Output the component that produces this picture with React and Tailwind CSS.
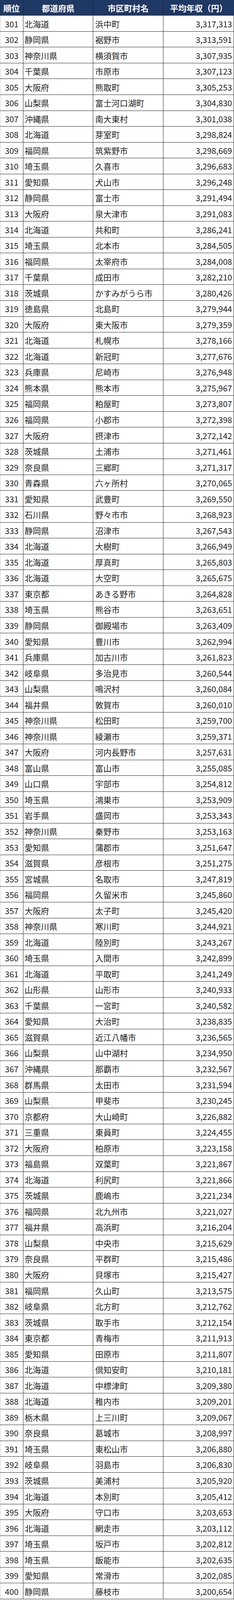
const rows = `301 北海道 浜中町 3,317,313
302 静岡県 裾野市 3,313,591
303 神奈川県 横須賀市 3,307,935
304 千葉県 市原市 3,307,123
305 大阪府 熊取町 3,305,253
306 山梨県 富士河口湖町 3,304,830
307 沖縄県 南大東村 3,301,038
308 北海道 芽室町 3,298,824
309 福岡県 筑紫野市 3,298,669
310 埼玉県 久喜市 3,296,683
311 愛知県 犬山市 3,296,248
312 静岡県 富士市 3,291,494
313 大阪府 泉大津市 3,291,083
314 北海道 共和町 3,286,241
315 埼玉県 北本市 3,284,505
316 福岡県 太宰府市 3,284,008
317 千葉県 成田市 3,282,210
318 茨城県 かすみがうら市 3,280,426
319 徳島県 北島町 3,279,944
320 大阪府 東大阪市 3,279,359
321 北海道 札幌市 3,278,166
322 北海道 新冠町 3,277,676
323 兵庫県 尼崎市 3,276,948
324 熊本県 熊本市 3,275,967
325 福岡県 粕屋町 3,273,807
326 福岡県 小郡市 3,272,398
327 大阪府 摂津市 3,272,142
328 茨城県 土浦市 3,271,461
329 奈良県 三郷町 3,271,317
330 青森県 六ヶ所村 3,270,065
331 愛知県 武豊町 3,269,550
332 石川県 野々市市 3,268,923
333 静岡県 沼津市 3,267,543
334 北海道 大樹町 3,266,949
335 北海道 厚真町 3,265,803
336 北海道 大空町 3,265,675
337 東京都 あきる野市 3,264,828
338 埼玉県 熊谷市 3,263,651
339 静岡県 御殿場市 3,263,409
340 愛知県 豊川市 3,262,994
341 兵庫県 加古川市 3,261,823
342 岐阜県 多治見市 3,260,544
343 山梨県 鳴沢村 3,260,084
344 福井県 敦賀市 3,260,010
345 神奈川県 松田町 3,259,700
346 神奈川県 綾瀬市 3,259,371
347 大阪府 河内長野市 3,257,631
348 富山県 富山市 3,255,085
349 山口県 宇部市 3,254,812
350 埼玉県 鴻巣市 3,253,909
351 岩手県 盛岡市 3,253,343
352 神奈川県 秦野市 3,253,163
353 愛知県 蒲郡市 3,251,647
354 滋賀県 彦根市 3,251,275
355 宮城県 名取市 3,247,819
356 福岡県 久留米市 3,245,860
357 大阪府 太子町 3,245,420
358 神奈川県 寒川町 3,244,921
359 北海道 陸別町 3,243,267
360 埼玉県 入間市 3,242,899
361 北海道 平取町 3,241,249
362 山形県 山形市 3,240,933
363 千葉県 一宮町 3,240,582
364 愛知県 大治町 3,238,835
365 滋賀県 近江八幡市 3,236,565
366 山梨県 山中湖村 3,234,950
367 沖縄県 那覇市 3,232,567
368 群馬県 太田市 3,231,594
369 山梨県 甲斐市 3,230,245
370 京都府 大山崎町 3,226,882
371 三重県 東員町 3,224,455
372 大阪府 柏原市 3,223,158
373 福島県 双葉町 3,221,867
374 北海道 利尻町 3,221,866
375 茨城県 鹿嶋市 3,221,234
376 福岡県 北九州市 3,221,027
377 福井県 高浜町 3,216,204
378 山梨県 中央市 3,215,629
379 奈良県 平群町 3,215,486
380 大阪府 貝塚市 3,215,427
381 福岡県 久山町 3,213,575
382 岐阜県 北方町 3,212,762
383 茨城県 取手市 3,212,154
384 東京都 青梅市 3,211,913
385 愛知県 田原市 3,211,807
386 北海道 倶知安町 3,210,181
387 北海道 中標津町 3,209,380
388 北海道 稚内市 3,209,201
389 栃木県 上三川町 3,209,067
390 奈良県 葛城市 3,208,997
391 埼玉県 東松山市 3,206,880
392 岐阜県 羽島市 3,206,830
393 茨城県 美浦村 3,205,920
394 北海道 本別町 3,205,412
395 大阪府 守口市 3,203,653
396 北海道 網走市 3,203,112
397 埼玉県 坂戸市 3,202,812
398 埼玉県 飯能市 3,202,635
399 愛知県 常滑市 3,202,085
400 静岡県 藤枝市 3,200,654`
  .split('\n')
  .map((line) => line.split(' '))

const App = () => {
  return (
    <div
      className="w-[600px] h-[calc(100vh-2px)] grid grid-rows-[minmax(0,43.4fr)_repeat(100,minmax(0,43.63fr))] bg-white text-[#222222] text-[21px] leading-none"
      style={{ fontFamily: '"Noto Sans CJK JP", "Noto Sans", sans-serif' }}
    >
      {/* Header */}
      <div className="grid grid-cols-[60px_179px_180px_181px] min-h-0 bg-[#203864] text-white font-bold">
        <div className="flex items-center justify-center border-r border-[#15264a]">順位</div>
        <div className="flex items-center justify-center border-r border-[#15264a]">都道府県</div>
        <div className="flex items-center justify-center border-r border-[#15264a]">市区町村名</div>
        <div className="flex items-center justify-center">平均年収（円）</div>
      </div>

      {/* Rows */}
      {rows.map(([rank, pref, city, income]) => (
        <div
          key={rank}
          className="grid grid-cols-[60px_179px_180px_181px] min-h-0 overflow-hidden border-b border-[#262626]"
        >
          <div className="flex items-center justify-center border-l border-l-[#c8c8c8] border-r border-[#262626] pt-[2px]">{rank}</div>
          <div className="flex items-center pl-[3px] border-r border-[#262626] pt-[2px]">{pref}</div>
          <div className="flex items-center pl-[5px] border-r border-[#262626] pt-[2px]">{city}</div>
          <div className="flex items-center justify-end pr-[4px] border-r border-[#262626] pt-[2px]">{income}</div>
        </div>
      ))}
    </div>
  )
}

export default App
